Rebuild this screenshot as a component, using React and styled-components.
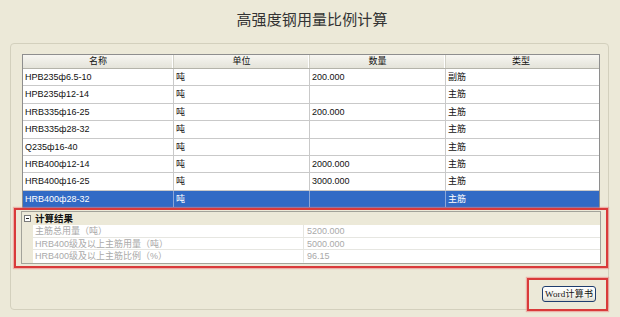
import React from "react";
import styled, { createGlobalStyle } from "styled-components";

const Global = createGlobalStyle`
  html, body { margin: 0; padding: 0; }
  body {
    background: #ece9d8;
    font-family: "Liberation Sans", "Noto Sans CJK SC", sans-serif;
    width: 620px;
    height: 317px;
    overflow: hidden;
  }
`;

const Page = styled.div`
  width: 620px;
  height: 317px;
  display: flex;
  flex-direction: column;
  box-sizing: border-box;
`;

const Title = styled.h1`
  margin: 0;
  height: 43px;
  box-sizing: border-box;
  padding-top: 9px;
  padding-left: 4px;
  text-align: center;
  font-family: "Noto Sans CJK SC", sans-serif;
  font-weight: 400;
  font-size: 15px;
  line-height: 20px;
  color: #333;
  letter-spacing: 0.1px;
`;

const GroupBox = styled.section`
  margin: 0 11px 0 10px;
  height: 267px;
  box-sizing: border-box;
  border: 1px solid #d3d0bd;
  border-radius: 4px;
  padding: 10px 0 0 3px;
  display: flex;
  flex-direction: column;
`;

const DataGrid = styled.div`
  margin: 0 8px;
  border: 1px solid #8e8e8e;
  border-bottom: none;
  background: #fff;
  font-size: 9px;
`;

const cols = "151px 136px 136px 151px";

const HeaderRow = styled.div`
  display: grid;
  grid-template-columns: ${cols};
  height: 14px;
  box-sizing: border-box;
  background: linear-gradient(#f7f6f1, #e4e3da);
  border-bottom: 1px solid #b4b3aa;
`;

const HeaderCell = styled.div`
  text-align: center;
  line-height: 13px;
  color: #111;
  border-right: 1px solid ${(p) => (p.$last ? "transparent" : "#d2d1c7")};
  box-shadow: ${(p) => (p.$last ? "none" : "inset -1px 0 0 #fff")};
`;

const Row = styled.div`
  display: grid;
  grid-template-columns: ${cols};
  height: 17.375px;
  box-sizing: border-box;
  border-bottom: 1px solid ${(p) => (p.$selected ? "#316ac5" : "#c9c9c9")};
  background: ${(p) => (p.$selected ? "#316ac5" : "#fff")};
  color: ${(p) => (p.$selected ? "#fff" : "#111")};
`;

const Cell = styled.div`
  padding-left: 2px;
  line-height: 16px;
  white-space: nowrap;
  overflow: hidden;
  border-right: 1px solid
    ${(p) => (p.$last ? "transparent" : p.$selected ? "#8aa6d8" : "#c9c9c9")};
`;

const ResultFrame = styled.div`
  margin-top: 0;
  height: 60px;
  box-sizing: border-box;
  border: 2px solid #d93a3a;
  box-shadow: 0 0 1px 1px rgba(236, 130, 130, 0.55);
  padding: 1px 5px 2px 5px;
`;

const PropertyGrid = styled.div`
  border: 1px solid #a3a39a;
  background: #fff;
  display: grid;
  grid-template-columns: 11px 270px 1fr;
  font-size: 9px;
`;

const CategoryRow = styled.div`
  grid-column: 1 / -1;
  display: grid;
  grid-template-columns: 11px 1fr;
  height: 13px;
  background: #ece9d8;
  align-items: center;
`;

const CollapseIcon = styled.span`
  justify-self: center;
  width: 7px;
  height: 7px;
  box-sizing: border-box;
  border: 1px solid #7a7a7a;
  background: #fff;
  position: relative;
  &::after {
    content: "";
    position: absolute;
    left: 1px;
    right: 1px;
    top: 2px;
    height: 1px;
    background: #222;
  }
`;

const CategoryText = styled.span`
  padding-left: 2px;
  font-weight: 700;
  font-size: 9.5px;
  color: #111;
  line-height: 13px;
`;

const Margin = styled.div`
  background: #ece9d8;
`;

const PropCell = styled.div`
  height: 12.67px;
  box-sizing: border-box;
  line-height: 12px;
  padding-left: ${(p) => (p.$value ? "3px" : "2px")};
  color: #a9a9a9;
  white-space: nowrap;
  overflow: hidden;
  border-bottom: 1px solid ${(p) => (p.$last ? "transparent" : "#e6e6e1")};
  border-left: ${(p) => (p.$value ? "1px solid #e6e6e1" : "none")};
`;

const Footer = styled.div`
  margin-top: 10px;
  margin-bottom: -3px;
  display: flex;
  justify-content: flex-end;
`;

const ButtonFrame = styled.div`
  border: 2px solid #d93a3a;
  box-shadow: 0 0 1px 1px rgba(236, 130, 130, 0.55);
  padding: 6px 10px 7px 13px;
  display: flex;
`;

const Button = styled.button`
  width: 54px;
  height: 16px;
  padding: 0;
  border: 1px solid #1f3d6e;
  border-radius: 3px;
  background: linear-gradient(#ffffff, #f2f1ea 70%, #d9d7cc);
  font-family: "Liberation Serif", "Noto Sans CJK SC", serif;
  font-size: 9px;
  color: #111;
  line-height: 14px;
  letter-spacing: 0.2px;
`;

const rows = [
  ["HPB235ф6.5-10", "吨", "200.000", "副筋"],
  ["HPB235ф12-14", "吨", "", "主筋"],
  ["HRB335ф16-25", "吨", "200.000", "主筋"],
  ["HRB335ф28-32", "吨", "", "主筋"],
  ["Q235ф16-40", "吨", "", "主筋"],
  ["HRB400ф12-14", "吨", "2000.000", "主筋"],
  ["HRB400ф16-25", "吨", "3000.000", "主筋"],
  ["HRB400ф28-32", "吨", "", "主筋"],
];

const props = [
  ["主筋总用量（吨）", "5200.000"],
  ["HRB400级及以上主筋用量（吨）", "5000.000"],
  ["HRB400级及以上主筋比例（%）", "96.15"],
];

const headers = ["名称", "单位", "数量", "类型"];

export default function App() {
  return (
    <Page>
      <Global />
      <Title>高强度钢用量比例计算</Title>
      <GroupBox>
        <DataGrid>
          <HeaderRow>
            {headers.map((h, i) => (
              <HeaderCell key={h} $last={i === 3}>
                {h}
              </HeaderCell>
            ))}
          </HeaderRow>
          {rows.map((r, ri) => {
            const sel = ri === rows.length - 1;
            return (
              <Row key={ri} $selected={sel}>
                {r.map((c, ci) => (
                  <Cell key={ci} $selected={sel} $last={ci === 3}>
                    {c}
                  </Cell>
                ))}
              </Row>
            );
          })}
        </DataGrid>
        <ResultFrame>
          <PropertyGrid>
            <CategoryRow>
              <CollapseIcon />
              <CategoryText>计算结果</CategoryText>
            </CategoryRow>
            {props.map(([l, v], i) => (
              <React.Fragment key={l}>
                <Margin />
                <PropCell $last={i === props.length - 1}>{l}</PropCell>
                <PropCell $value $last={i === props.length - 1}>
                  {v}
                </PropCell>
              </React.Fragment>
            ))}
          </PropertyGrid>
        </ResultFrame>
        <Footer>
          <ButtonFrame>
            <Button>Word计算书</Button>
          </ButtonFrame>
        </Footer>
      </GroupBox>
    </Page>
  );
}
